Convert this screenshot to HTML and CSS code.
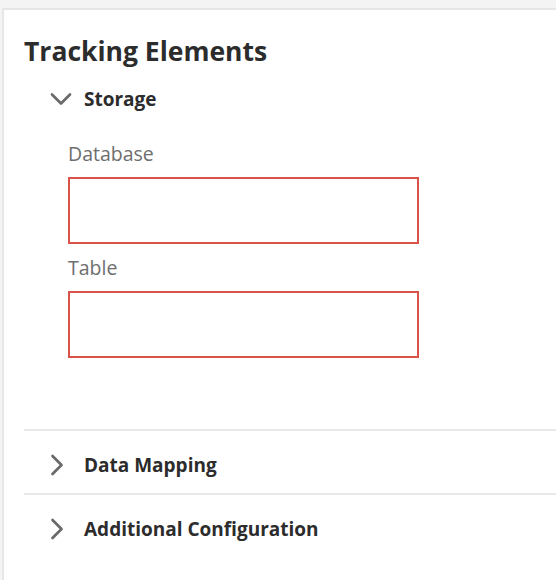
FILE: index.html
```html
<!DOCTYPE html>
<html>
<head>
<meta charset="utf-8">
<link rel="stylesheet" href="styles.css">
</head>
<body>
<div class="frame">
  <div class="panel">
    <h1 class="title">Tracking Elements</h1>
    <section class="section open">
      <div class="section-head">
        <svg class="chev" viewBox="0 0 22 22" width="22" height="22"><path d="M2 6.5 L11 15.5 L20 6.5" fill="none" stroke="#6a6a6a" stroke-width="2.7" stroke-linecap="round" stroke-linejoin="round"/></svg>
        <span class="section-label">Storage</span>
      </div>
      <div class="fields">
        <label class="field-label">Database</label>
        <div class="input"></div>
        <label class="field-label">Table</label>
        <div class="input"></div>
      </div>
    </section>
    <section class="section closed">
      <div class="section-head">
        <svg class="chev" viewBox="0 0 22 22" width="22" height="22"><path d="M2.5 2 L11.5 11 L2.5 20" fill="none" stroke="#6a6a6a" stroke-width="2.7" stroke-linecap="round" stroke-linejoin="round"/></svg>
        <span class="section-label">Data Mapping</span>
      </div>
    </section>
    <section class="section closed">
      <div class="section-head">
        <svg class="chev" viewBox="0 0 22 22" width="22" height="22"><path d="M2.5 2 L11.5 11 L2.5 20" fill="none" stroke="#6a6a6a" stroke-width="2.7" stroke-linecap="round" stroke-linejoin="round"/></svg>
        <span class="section-label">Additional Configuration</span>
      </div>
    </section>
  </div>
</div>
</body>
</html>
```

FILE: styles.css
```css
* { box-sizing: border-box; }
html, body { margin: 0; padding: 0; }
body {
  background: #f4f4f4;
  font-family: "Open Sans", "Noto Sans", sans-serif;
  width: 556px;
  height: 580px;
  overflow: hidden;
}
.frame {
  padding: 8px 0 0 2px;
  height: 580px;
}
.panel {
  background: #fff;
  border-top: 2px solid #e6e6e6;
  border-left: 2px solid #e6e6e6;
  height: 100%;
  padding: 0 0 0 20px;
}
.title {
  margin: 0;
  padding-top: 23px;
  font-size: 26.5px;
  font-weight: 700;
  color: #2c2c2c;
  line-height: 36px;
}
.section-head {
  display: flex;
  align-items: center;
  height: 62px;
  padding-left: 24px;
}
.section.open .section-head {
  height: 60px;
}
.section.closed .section-head {
  padding-top: 5px;
}
.chev {
  width: 22px;
  height: 22px;
  margin-left: 2px;
  margin-right: 12px;
  flex: none;
}
.section-label {
  font-size: 19px;
  font-weight: 700;
  color: #2c2c2c;
}
.fields {
  padding: 11px 0 61px 44px;
  display: flex;
  flex-direction: column;
}
.field-label {
  font-size: 19.5px;
  color: #6e6e6e;
  line-height: 28px;
  margin-bottom: 9px;
}
.input {
  width: 351px;
  height: 67px;
  border: 2px solid #d9534a;
  background: #fff;
  margin-bottom: 10px;
}
.section.closed {
  border-top: 2px solid #e8e8e8;
}
```
